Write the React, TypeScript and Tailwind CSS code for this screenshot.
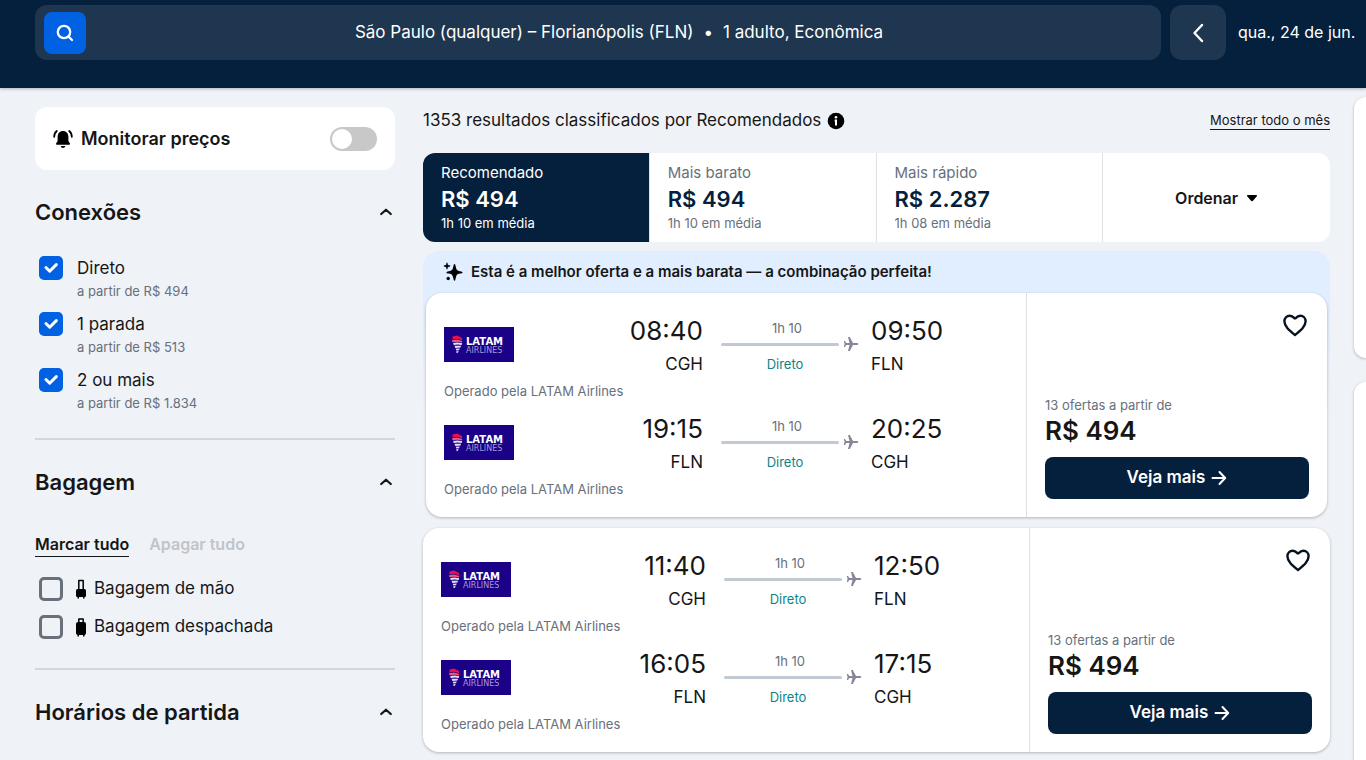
import React, { useState } from 'react';

type Leg = { depart: string; from: string; arrive: string; to: string };

const connections = [
  { id: 'direct', label: 'Direto', price: 'a partir de R$ 494' },
  { id: 'one-stop', label: '1 parada', price: 'a partir de R$ 513' },
  { id: 'two-stops', label: '2 ou mais', price: 'a partir de R$ 1.834' },
];

const sortTabs = [
  { label: 'Recomendado', price: 'R$ 494', time: '1h 10 em média' },
  { label: 'Mais barato', price: 'R$ 494', time: '1h 10 em média' },
  { label: 'Mais rápido', price: 'R$ 2.287', time: '1h 08 em média' },
];

const bestOffer: Leg[] = [
  { depart: '08:40', from: 'CGH', arrive: '09:50', to: 'FLN' },
  { depart: '19:15', from: 'FLN', arrive: '20:25', to: 'CGH' },
];

const secondOffer: Leg[] = [
  { depart: '11:40', from: 'CGH', arrive: '12:50', to: 'FLN' },
  { depart: '16:05', from: 'FLN', arrive: '17:15', to: 'CGH' },
];

function LatamLogo() {
  return (
    <svg width="70" height="35" viewBox="0 0 70 35" role="img" aria-label="LATAM Airlines">
      <rect width="70" height="35" fill="#1b0088" />
      <path d="M8.500 9.500l4.500-1 5 2.500v2.200l-4.500-1.500-5 .8z" fill="#e8114b" />
      <path d="M8 13.200l5-.8 5.200 1.700-.2 1.500-4.500-.8-5 .5z" fill="#f0567c" />
      <path d="M9.200 16l4.300-.5 4.700.7-.5 1.700-4-.3-4 .3zM10.500 18.800l6.700-.1-.8 1.800-5 .4zM11.700 21.700l4.100-.2-.8 1.700-2.700.3zM12.300 24.200l2.300-.2-.6 1.700-1.500.2z" fill="#e4dff5" />
      <text x="22" y="18" fontSize="10" fontWeight="700" fontFamily="DejaVu Sans, sans-serif" fill="#fff">
        LATAM
      </text>
      <text x="22" y="26" fontSize="8" fontFamily="DejaVu Sans, sans-serif" fill="#a79bd6">
        AIRLINES
      </text>
    </svg>
  );
}

function BellIcon() {
  return (
    <svg width="20" height="20" viewBox="0 0 20 20" aria-hidden="true">
      <path d="M10 2C6.600 2 4.600 4.600 4.600 8v4l-1.500 2.600c-.3.600 0 1.100.6 1.100h12.600c.6 0 .9-.5.600-1.100L15.400 12V8C15.400 4.600 13.400 2 10 2z" />
      <path d="M7.700 17h4.600c-.3 1.300-1.200 2-2.300 2s-2-.7-2.300-2z" />
      <path d="M3.800 2C2.200 3.300 1.200 5.300 1.200 7.800M16.200 2c1.600 1.300 2.600 3.300 2.600 5.800" fill="none" stroke="#000" strokeWidth="1.800" strokeLinecap="round" />
    </svg>
  );
}

function SparkleIcon() {
  return (
    <svg width="20" height="20" viewBox="0 0 20 20" aria-hidden="true">
      <path d="M11.500 2c.7 0 .9 1.200 1.300 3 .7 3 1.200 3.500 4.200 4.200 1.800.4 2.500.6 2.500 1.200s-.7.8-2.500 1.200c-3 .7-3.500 1.200-4.200 4.200-.4 1.800-.6 3-1.300 3s-.9-1.200-1.300-3c-.7-3-1.200-3.500-4.200-4.200-1.800-.4-2.500-.6-2.500-1.200s.7-.8 2.500-1.200c3-.7 3.500-1.200 4.200-4.200.4-1.800.6-3 1.300-3z" />
      <path d="M4 .8c.5 2.300 1 2.800 3.200 3.200C5 4.500 4.500 5 4 7.200 3.500 5 3 4.500.8 4 3 3.600 3.500 3.100 4 .800z" stroke="#000" strokeWidth=".6" />
      <circle cx="5.200" cy="16.500" r="1.700" />
    </svg>
  );
}

function PlaneIcon() {
  return (
    <svg width="16" height="16" viewBox="0 0 16 16" fill="#8b8498" aria-hidden="true" className="shrink-0">
      <path d="M15.200 8c0-.6-.6-1-1.400-1H10L6.800 1H5l1.500 6H3.300L2 5H.8l.8 3-.8 3H2l1.300-2h3.200L5 15h1.800L10 9h3.800c.8 0 1.400-.4 1.400-1z" />
    </svg>
  );
}

function BagIcon({ tall }: { tall: boolean }) {
  return (
    <svg width="12" height="20" viewBox="0 0 12 20" aria-hidden="true">
      <path d={tall ? 'M3.800 7V2h4.400v5' : 'M3.800 11V1.500h4.400V11'} fill="none" stroke="#000" strokeWidth="1.500" strokeLinejoin="round" />
      {tall ? <rect x="1" y="5" width="10" height="13" rx="2" /> : <rect x="1" y="10" width="10" height="8" rx="1.500" />}
      <path d="M2.500 17h1.500v2.500h-1.500zM8 17h1.500v2.500H8z" />
    </svg>
  );
}

function Checkbox({ id, defaultChecked }: { id: string; defaultChecked?: boolean }) {
  return (
    <span className="grid size-6 shrink-0 place-items-center">
      <input
        id={id}
        type="checkbox"
        defaultChecked={defaultChecked}
        className="peer col-start-1 row-start-1 size-6 appearance-none rounded-[5px] border-3 border-[#68707b] checked:border-[#0062e3] checked:bg-[#0062e3]"
      />
      <svg
        viewBox="0 0 24 24"
        className="pointer-events-none invisible col-start-1 row-start-1 size-6 peer-checked:visible"
        aria-hidden="true"
      >
        <path d="M7 11.500l3.700 3.700L17.300 8.600" fill="none" stroke="#fff" strokeWidth="3" strokeLinecap="round" strokeLinejoin="round" />
      </svg>
    </span>
  );
}

function FilterHeading({ children }: { children: React.ReactNode }) {
  return (
    <h2>
      <button type="button" className="flex h-9 w-full items-center justify-between pr-[3px] text-[22px] font-semibold">
        {children}
        <svg width="12" height="8" viewBox="0 0 12 8" aria-hidden="true">
          <path d="M1.200 6L6 1.700 10.800 6" fill="none" stroke="#161616" strokeWidth="2.200" strokeLinecap="round" strokeLinejoin="round" />
        </svg>
      </button>
    </h2>
  );
}

function FlightLeg({ leg }: { leg: Leg }) {
  return (
    <div>
      <div className="flex">
        <div className="flex flex-1 items-start pt-3.5">
          <LatamLogo />
        </div>
        <div className="text-right">
          <div className="text-[26px] leading-9">{leg.depart}</div>
          <div className="text-[17px] leading-[30px]">{leg.from}</div>
        </div>
        <div className="ml-[18px] flex w-[138px] flex-col pt-[5px] text-[13px] leading-5">
          <span className="w-[132px] text-center text-[#68707b]">1h 10</span>
          <span className="flex h-3 items-center gap-1">
            <span className="h-[3px] flex-1 rounded bg-[#c1c9d2]" />
            <PlaneIcon />
          </span>
          <span className="mt-1 w-32 text-center text-[#0c838a]">Direto</span>
        </div>
        <div className="ml-3 w-[137px]">
          <div className="text-[26px] leading-9">{leg.arrive}</div>
          <div className="text-[17px] leading-[30px]">{leg.to}</div>
        </div>
      </div>
      <p className="mt-0.5 text-[13px] leading-5 text-[#68707b]">Operado pela LATAM Airlines</p>
    </div>
  );
}

function FlightCard({ legs }: { legs: Leg[] }) {
  return (
    <article className="flex rounded-2xl bg-white shadow-[0_1px_3px_rgba(37,32,31,0.3)]">
      <div className="flex flex-1 flex-col gap-2.5 px-[18px] pb-[18px] pt-5">
        {legs.map((leg) => (
          <FlightLeg key={leg.depart} leg={leg} />
        ))}
      </div>
      <div className="flex w-[301px] flex-col border-l border-[#dfe1e6] p-[18px]">
        <button type="button" aria-label="Salvar" className="flex size-7 items-center justify-center self-end">
          <svg width="28" height="28" viewBox="0 0 28 28" fill="none" stroke="#05121f" strokeWidth="2.400" strokeLinejoin="round" aria-hidden="true">
            <path d="M14 24C8.500 19.500 3.400 15.500 3.400 10.300 3.400 6.900 5.800 4.700 8.700 4.700c2.100 0 3.300.9 4.400 2.200.5.600 1.300.6 1.800 0 1.100-1.300 2.300-2.200 4.400-2.200 2.900 0 5.300 2.200 5.300 5.600C24.600 15.500 19.500 19.500 14 24z" />
          </svg>
        </button>
        <p className="mt-auto text-[13px] leading-5 text-[#68707b]">13 ofertas a partir de</p>
        <p className="text-[26px] font-semibold leading-8">R$ 494</p>
        <button
          type="button"
          className="mt-2.5 flex h-[42px] items-center justify-center gap-1.5 rounded-lg bg-[#05203c] text-[17px] font-semibold text-white"
        >
          Veja mais
          <svg width="16" height="16" viewBox="0 0 16 16" fill="none" stroke="#fff" strokeWidth="2" strokeLinecap="round" strokeLinejoin="round" aria-hidden="true">
            <path d="M1.500 8h12.500M8.500 2l5.700 6-5.700 6" />
          </svg>
        </button>
      </div>
    </article>
  );
}

export default function App() {
  const [activeTab, setActiveTab] = useState(0);

  return (
    <div className="min-h-screen overflow-hidden bg-[#eff2f7] font-['Inter',sans-serif] text-[#161616]">
      {/* Search header */}
      <header className="flex h-[88px] items-start bg-[#05203c] pl-[35px] pt-[5px] text-[17px] text-white shadow-[0_1px_3px_rgba(37,32,31,0.3)]">
        <div className="flex h-[55px] flex-1 items-center rounded-xl bg-[#1e364f] px-[9px]">
          <button type="button" aria-label="Pesquisar" className="flex size-[42px] items-center justify-center rounded-lg bg-[#0062e3]">
            <svg width="20" height="20" viewBox="0 0 20 20" fill="none" stroke="#fff" strokeWidth="2.300" strokeLinecap="round" aria-hidden="true">
              <circle cx="9" cy="9" r="6.200" />
              <path d="M13.700 13.700L17 17" />
            </svg>
          </button>
          <p className="flex flex-1 justify-center gap-2.5">
            <span>São Paulo (qualquer) – Florianópolis (FLN)</span>
            <span>•</span>
            <span>1 adulto, Econômica</span>
          </p>
        </div>
        <button type="button" aria-label="Dia anterior" className="ml-[9px] flex h-[55px] w-14 items-center justify-center rounded-xl bg-[#1e364f]">
          <svg width="12" height="20" viewBox="0 0 12 20" fill="none" stroke="#fff" strokeWidth="2.400" strokeLinecap="round" strokeLinejoin="round" aria-hidden="true">
            <path d="M10 2L2.500 10l7.500 8" />
          </svg>
        </button>
        <p className="ml-3 w-32 whitespace-nowrap text-base leading-[55px]">qua., 24 de jun.</p>
      </header>

      <div className="flex items-start pl-[35px]">
        {/* Filters */}
        <aside className="w-[360px] shrink-0 pt-[19px]">
          <div className="flex h-[63px] items-center rounded-xl bg-white px-[18px]">
            <BellIcon />
            <label htmlFor="price-alert" className="ml-2 flex-1 text-lg font-semibold">
              Monitorar preços
            </label>
            <input
              id="price-alert"
              type="checkbox"
              role="switch"
              className="h-6 w-[47px] appearance-none rounded-full bg-[#c8c8c8] before:m-0.5 before:block before:size-5 before:rounded-full before:bg-white checked:bg-[#0062e3] checked:before:ml-6"
            />
          </div>

          <section className="border-b-2 border-[#d3d7dc] pb-4 pt-6">
            <FilterHeading>Conexões</FilterHeading>
            <ul className="mt-6">
              {connections.map((item) => (
                <li key={item.id} className="flex h-14 items-start gap-3.5 pl-1">
                  <span className="pt-0.5">
                    <Checkbox id={item.id} defaultChecked />
                  </span>
                  <label htmlFor={item.id}>
                    <span className="block text-[17px] leading-7">{item.label}</span>
                    <span className="block text-[13px] leading-[18px] text-[#68707b]">{item.price}</span>
                  </label>
                </li>
              ))}
            </ul>
          </section>

          <section className="border-b-2 border-[#d3d7dc] pb-[22px] pt-6">
            <FilterHeading>Bagagem</FilterHeading>
            <div className="mt-8 flex items-start gap-5 font-semibold leading-6">
              <button type="button" className="border-b border-[#161616]">Marcar tudo</button>
              <button type="button" disabled className="text-[#c1c4c9]">Apagar tudo</button>
            </div>
            <ul className="mt-[13px]">
              <li className="flex h-[38px] items-center pl-1">
                <Checkbox id="hand-bag" />
                <label htmlFor="hand-bag" className="ml-3 flex items-center gap-[7px] text-[17px]">
                  <BagIcon tall={false} />
                  Bagagem de mão
                </label>
              </li>
              <li className="flex h-[38px] items-center pl-1">
                <Checkbox id="checked-bag" />
                <label htmlFor="checked-bag" className="ml-3 flex items-center gap-[7px] text-[17px]">
                  <BagIcon tall />
                  Bagagem despachada
                </label>
              </li>
            </ul>
          </section>

          <section className="pt-6">
            <FilterHeading>Horários de partida</FilterHeading>
          </section>
        </aside>

        {/* Results */}
        <main className="ml-7 min-w-0 flex-1">
          <div className="flex h-[65px] items-center justify-between">
            <h1 className="flex items-center gap-1.5 text-[17px]">
              1353 resultados classificados por Recomendados
              <svg width="18" height="18" viewBox="0 0 18 18" aria-hidden="true">
                <circle cx="9" cy="9" r="8.300" />
                <circle cx="9" cy="5.200" r="1.300" fill="#fff" />
                <path d="M7.600 8.600H9v4.900" fill="none" stroke="#fff" strokeWidth="2" />
              </svg>
            </h1>
            <a href="#" className="border-b border-[#161616] text-[13px] leading-[18px]">Mostrar todo o mês</a>
          </div>

          <div className="grid h-[89px] grid-cols-4 divide-x divide-[#dfe1e6] overflow-hidden rounded-xl bg-white">
            {sortTabs.map((tab, i) => (
              <button
                key={tab.label}
                type="button"
                onClick={() => setActiveTab(i)}
                className={
                  i === activeTab
                    ? 'flex flex-col justify-center bg-[#05203c] px-[18px] pb-0.5 text-left text-white'
                    : 'flex flex-col justify-center px-[18px] pb-0.5 text-left text-[#68707b]'
                }
              >
                <span className="text-[15px] leading-6">{tab.label}</span>
                <span className={i === activeTab ? 'text-[22px] font-semibold leading-7' : 'text-[22px] font-semibold leading-7 text-[#05203c]'}>
                  {tab.price}
                </span>
                <span className="text-[13px] leading-5">{tab.time}</span>
              </button>
            ))}
            <button type="button" className="flex items-center justify-center gap-2 font-semibold">
              Ordenar
              <svg width="12" height="8" viewBox="0 0 12 8" aria-hidden="true">
                <path d="M1.800 1h8.400c.7 0 1 .7.600 1.200L7 6.700c-.5.600-1.500.6-2 0L1.200 2.200C.800 1.700 1.100 1 1.800 1z" />
              </svg>
            </button>
          </div>

          <section className="mt-[9px] rounded-2xl bg-linear-to-b from-[#e0eeff] from-25% to-[#eff2f7] to-60%">
            <p className="flex h-[42px] items-center gap-2 px-5 text-[15px] font-semibold">
              <SparkleIcon />
              Esta é a melhor oferta e a mais barata — a combinação perfeita!
            </p>
            <div className="px-[3px]">
              <FlightCard legs={bestOffer} />
            </div>
          </section>

          <div className="mt-[11px]">
            <FlightCard legs={secondOffer} />
          </div>
        </main>

        {/* Sponsored column */}
        <aside className="ml-6 flex w-3 shrink-0 flex-col gap-6 pt-[9px]">
          <div className="h-[261px] rounded-l-xl bg-white shadow-[0_1px_3px_rgba(37,32,31,0.3)]" />
          <div className="h-[400px] rounded-l-xl bg-white shadow-[0_1px_3px_rgba(37,32,31,0.3)]" />
        </aside>
      </div>
    </div>
  );
}
